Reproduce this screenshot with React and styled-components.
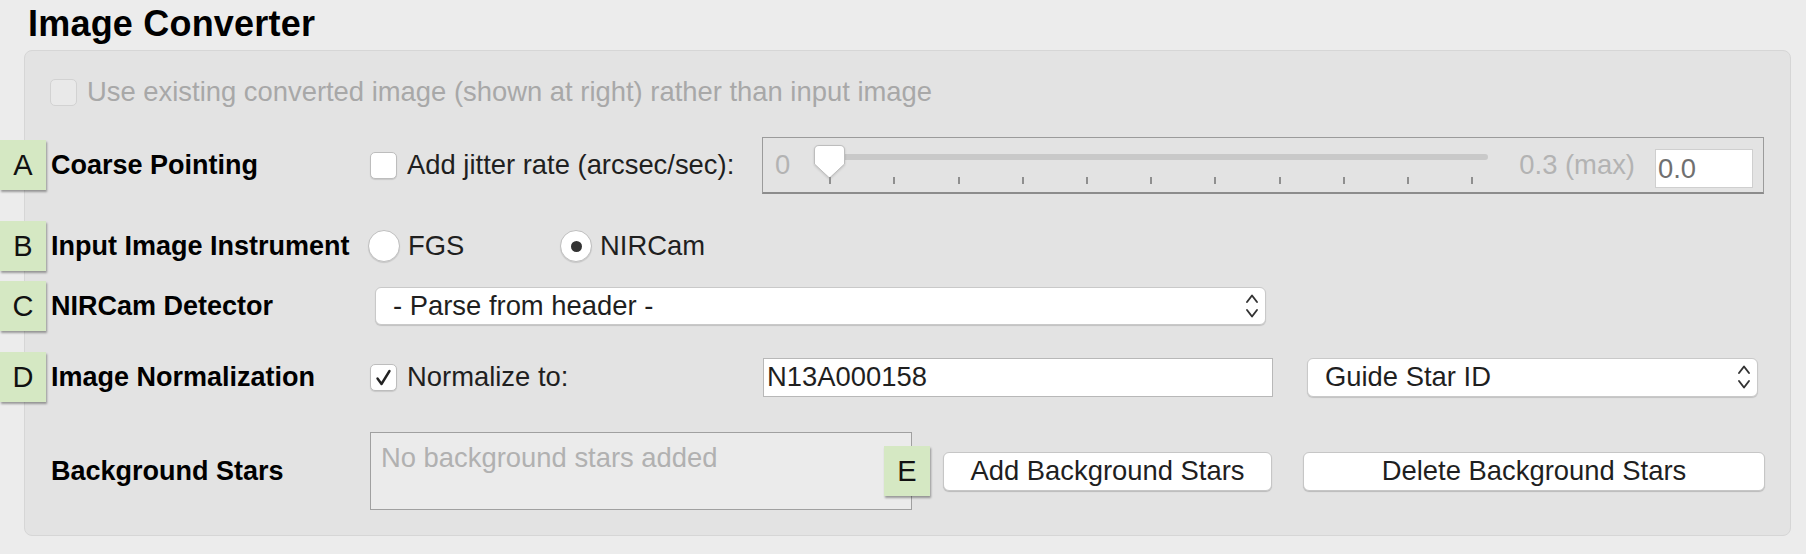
import React from 'react';
import styled, { createGlobalStyle } from 'styled-components';

const GlobalStyle = createGlobalStyle`
    body {
        margin: 0;
        background: #ececec;
        font-family: "Liberation Sans", Arial, sans-serif;
    }
`;

const Page = styled.div`
    width: 1806px;
    height: 554px;
    box-sizing: border-box;
    padding-top: 4px;
    background: #ececec;
    overflow: hidden;
`;

const Title = styled.h1`
    margin: 0;
    padding-left: 28px;
    font-size: 36px;
    line-height: 40px;
    font-weight: 700;
    letter-spacing: 0.2px;
    color: #000;
`;

const Panel = styled.div`
    margin: 6px 15px 0 24px;
    height: 486px;
    box-sizing: border-box;
    padding: 13px 0 17px 26px;
    background: #e3e3e3;
    border: 1px solid #d6d6d6;
    border-radius: 8px;
    display: flex;
    flex-direction: column;
`;

const Row = styled.div`
    position: relative;
    display: flex;
    align-items: center;
    height: ${props => props.$h}px;
    flex: none;
`;

const Label = styled.div`
    width: 319px;
    flex: none;
    font-size: 27px;
    font-weight: 700;
    color: #000;
    white-space: nowrap;
`;

const Badge = styled.div`
    position: absolute;
    left: ${props => props.$left}px;
    top: 50%;
    transform: translateY(-50%);
    width: 46px;
    height: 50px;
    background: #d5e8c3;
    box-shadow: 1px 2px 2px rgba(0, 0, 0, 0.35);
    display: flex;
    align-items: center;
    justify-content: center;
    font-size: 29px;
    color: #111;
    z-index: 2;
`;

const Text = styled.span`
    font-size: 27.4px;
    color: ${props => props.$muted ? '#a8a8a8' : '#1f1f1f'};
    margin-left: ${props => props.$ml || 0}px;
    white-space: nowrap;
`;

const Check = styled.span`
    width: 27px;
    height: 27px;
    box-sizing: border-box;
    flex: none;
    margin-left: ${props => props.$ml || 0}px;
    border: 1px solid ${props => props.$disabled ? '#d2d2d2' : '#bdbdbd'};
    background: ${props => props.$disabled ? '#e9e9e9' : '#fff'};
    border-radius: 5px;
    box-shadow: ${props => props.$disabled ? 'none' : '0 1px 1px rgba(0, 0, 0, 0.12)'};
    display: flex;
    align-items: center;
    justify-content: center;
`;

const CheckGroup = styled.div`
    display: flex;
    align-items: center;
    width: ${props => props.$w}px;
    flex: none;
`;

const SliderBox = styled.div`
    width: 1002px;
    height: 57px;
    box-sizing: border-box;
    border: 1px solid #9b9b9b;
    border-bottom: 2px solid #8c8c8c;
    display: flex;
    align-items: center;
    padding: 0 10px 0 12px;
`;

const SliderLabel = styled.span`
    font-size: 27.4px;
    color: #b3b3b3;
    margin-left: ${props => props.$ml || 0}px;
    white-space: nowrap;
`;

const TrackArea = styled.div`
    position: relative;
    flex: 1;
    align-self: stretch;
    margin-left: 24px;
`;

const TrackBar = styled.div`
    position: absolute;
    left: 0;
    right: 0;
    top: 16px;
    height: 6px;
    border-radius: 3px;
    background: #c9c9c9;
`;

const Thumb = styled.svg`
    position: absolute;
    left: 0;
    top: 7px;
    filter: drop-shadow(0 1px 1px rgba(0, 0, 0, 0.15));
`;

const Ticks = styled.div`
    position: absolute;
    left: 15px;
    right: 15px;
    top: 39px;
    display: flex;
    justify-content: space-between;
`;

const Tick = styled.span`
    width: 2px;
    height: 7px;
    background: #8f8f8f;
`;

const ValueBox = styled.div`
    width: 98px;
    height: 39px;
    box-sizing: border-box;
    margin: 8px 0 0 20px;
    padding-left: 2px;
    background: #fff;
    border: 1px solid #cfcfcf;
    font-size: 27.4px;
    color: #707070;
    display: flex;
    align-items: center;
`;

const RadioGroup = styled.div`
    display: flex;
    align-items: center;
    margin-left: -2px;
`;

const RadioOption = styled.div`
    display: flex;
    align-items: center;
    width: ${props => props.$w ? `${props.$w}px` : 'auto'};
`;

const Radio = styled.span`
    width: 32px;
    height: 32px;
    box-sizing: border-box;
    border-radius: 50%;
    background: #fff;
    border: 1px solid #bfbfbf;
    box-shadow: 0 1px 1px rgba(0, 0, 0, 0.12);
    display: flex;
    align-items: center;
    justify-content: center;

    &::after {
        content: "";
        display: ${props => props.$on ? 'block' : 'none'};
        width: 11px;
        height: 11px;
        border-radius: 50%;
        background: #333;
    }
`;

const PopUp = styled.div`
    width: ${props => props.$w}px;
    height: ${props => props.$h || 38}px;
    box-sizing: border-box;
    margin-left: ${props => props.$ml || 0}px;
    padding: 0 6px 0 17px;
    background: #fff;
    border: 1px solid #c9c9c9;
    border-radius: 6px;
    box-shadow: 0 1px 1px rgba(0, 0, 0, 0.15);
    display: flex;
    align-items: center;
    justify-content: space-between;
    font-size: 27.4px;
    color: #1f1f1f;
    flex: none;
`;

const TextInput = styled.input`
    width: 510px;
    height: 39px;
    box-sizing: border-box;
    margin: 0;
    padding: 0 3px;
    border: 1px solid #b8b8b8;
    border-radius: 0;
    background: #fff;
    font: inherit;
    font-size: 27.4px;
    color: #1f1f1f;
    outline: none;
    flex: none;
`;

const AreaWrap = styled.div`
    position: relative;
    width: 542px;
    height: 78px;
    flex: none;
`;

const TextArea = styled.textarea`
    width: 100%;
    height: 100%;
    box-sizing: border-box;
    margin: 0;
    padding: 9px 10px;
    resize: none;
    background: #ebebeb;
    border: 1px solid #a0a0a0;
    border-radius: 0;
    font: inherit;
    font-size: 27.4px;
    color: #1f1f1f;
    outline: none;

    &::placeholder {
        color: #b1b1b1;
    }
`;

const Button = styled.button`
    width: ${props => props.$w}px;
    height: 39px;
    margin: 0 0 0 31px;
    padding: 0;
    box-sizing: border-box;
    background: #fff;
    border: 1px solid #c6c6c6;
    border-radius: 6px;
    box-shadow: 0 1px 1px rgba(0, 0, 0, 0.18);
    font: inherit;
    font-size: 27.4px;
    color: #1f1f1f;
    flex: none;
`;

const Chevrons = () => (
    <svg width="14" height="28" viewBox="0 0 14 28">
        <path d="M2 10 L7 3.5 L12 10" fill="none" stroke="#333" strokeWidth="1.9" strokeLinecap="round" strokeLinejoin="round" />
        <path d="M2 18 L7 24.5 L12 18" fill="none" stroke="#333" strokeWidth="1.9" strokeLinecap="round" strokeLinejoin="round" />
    </svg>
);

const CheckMark = () => (
    <svg width="21" height="21" viewBox="0 0 21 21">
        <path d="M4.5 11.5 L8.5 17 L16.5 4" fill="none" stroke="#222" strokeWidth="2.4" strokeLinecap="round" strokeLinejoin="round" />
    </svg>
);

const TICKS = Array.from({ length: 11 });

const App = () => {
    return (
        <Page>
            <GlobalStyle />
            <Title>Image Converter</Title>
            <Panel>
                <Row $h={56}>
                    <Check $disabled $ml={-1} />
                    <Text $muted $ml={10}>Use existing converted image (shown at right) rather than input image</Text>
                </Row>

                <Row $h={90}>
                    <Badge $left={-51}>A</Badge>
                    <Label>Coarse Pointing</Label>
                    <CheckGroup $w={392}>
                        <Check />
                        <Text $ml={10}>Add jitter rate (arcsec/sec):</Text>
                    </CheckGroup>
                    <SliderBox>
                        <SliderLabel>0</SliderLabel>
                        <TrackArea>
                            <TrackBar />
                            <Thumb width="31" height="34" viewBox="0 0 31 34">
                                <path d="M0.5 5 Q0.5 0.5 5 0.5 H26 Q30.5 0.5 30.5 5 V19 L15.5 33 L0.5 19 Z" fill="#fff" stroke="#bdbdbd" />
                            </Thumb>
                            <Ticks>
                                {TICKS.map((_, i) => <Tick key={i} />)}
                            </Ticks>
                        </TrackArea>
                        <SliderLabel $ml={31}>0.3 (max)</SliderLabel>
                        <ValueBox>0.0</ValueBox>
                    </SliderBox>
                </Row>

                <Row $h={72}>
                    <Badge $left={-51}>B</Badge>
                    <Label>Input Image Instrument</Label>
                    <RadioGroup>
                        <RadioOption $w={192}>
                            <Radio />
                            <Text $ml={8}>FGS</Text>
                        </RadioOption>
                        <RadioOption>
                            <Radio $on />
                            <Text $ml={8}>NIRCam</Text>
                        </RadioOption>
                    </RadioGroup>
                </Row>

                <Row $h={48}>
                    <Badge $left={-51}>C</Badge>
                    <Label>NIRCam Detector</Label>
                    <PopUp $w={891} $ml={5}>
                        <span>- Parse from header -</span>
                        <Chevrons />
                    </PopUp>
                </Row>

                <Row $h={94}>
                    <Badge $left={-51}>D</Badge>
                    <Label>Image Normalization</Label>
                    <CheckGroup $w={393}>
                        <Check>
                            <CheckMark />
                        </Check>
                        <Text $ml={10}>Normalize to:</Text>
                    </CheckGroup>
                    <TextInput readOnly value="N13A000158" />
                    <PopUp $w={451} $h={39} $ml={34}>
                        <span>Guide Star ID</span>
                        <Chevrons />
                    </PopUp>
                </Row>

                <Row $h={94}>
                    <Label>Background Stars</Label>
                    <AreaWrap>
                        <TextArea readOnly placeholder="No background stars added" />
                        <Badge $left={514}>E</Badge>
                    </AreaWrap>
                    <Button $w={329}>Add Background Stars</Button>
                    <Button $w={462}>Delete Background Stars</Button>
                </Row>
            </Panel>
        </Page>
    );
};

export default App;
